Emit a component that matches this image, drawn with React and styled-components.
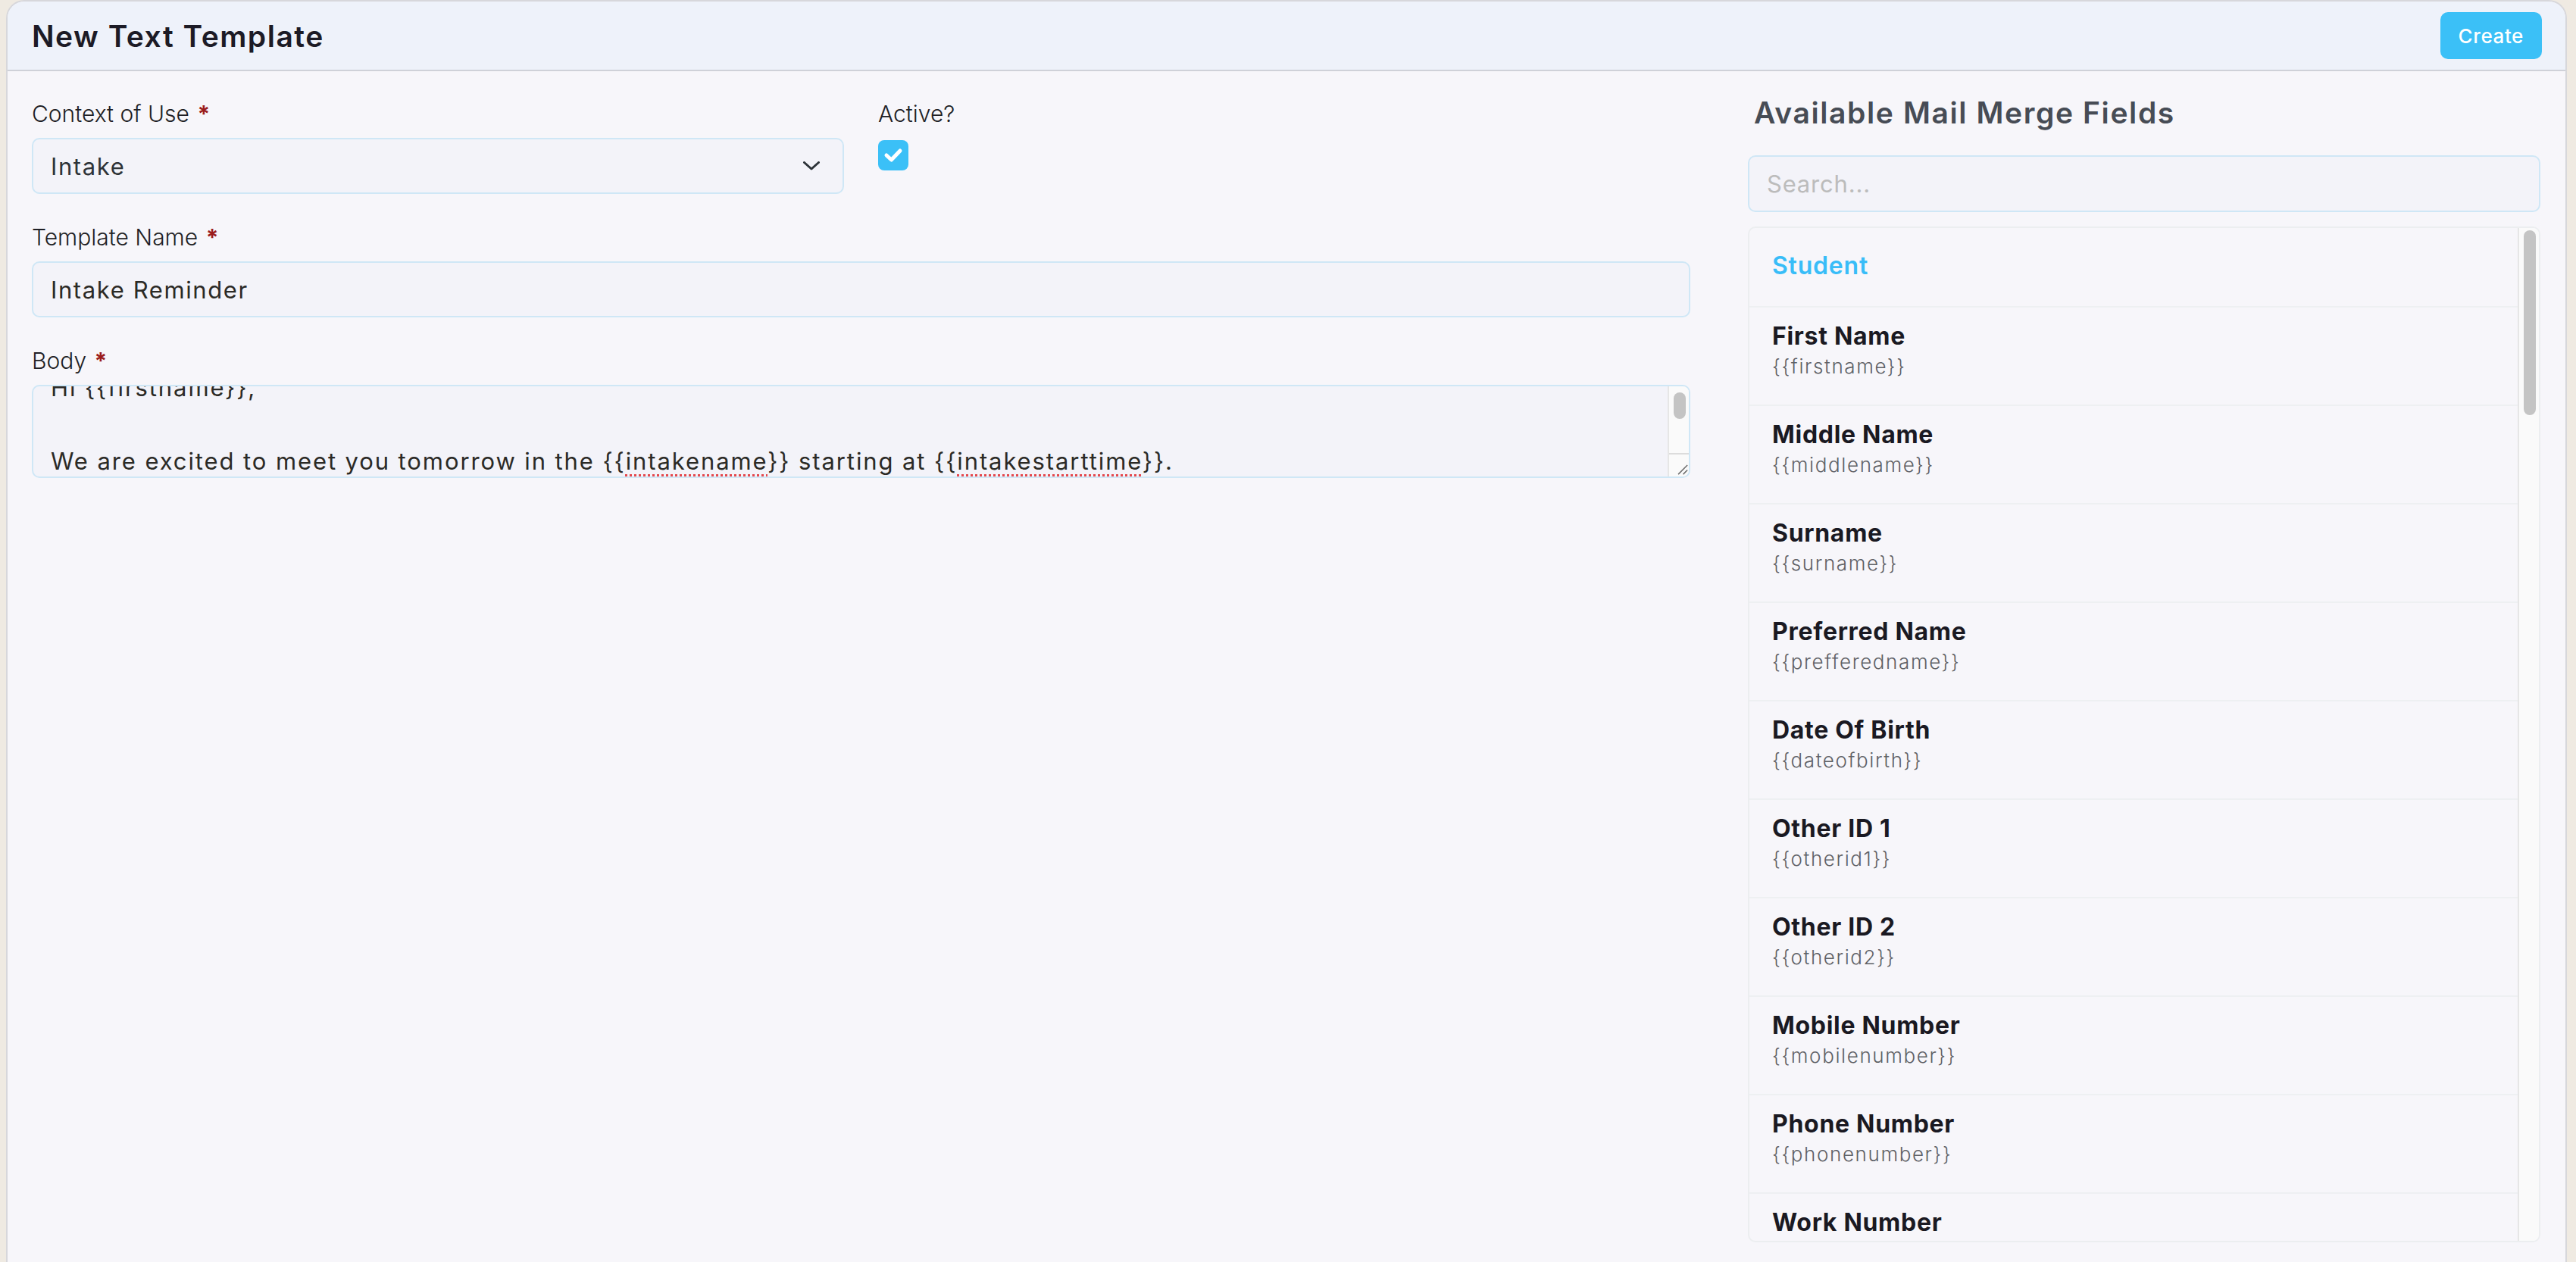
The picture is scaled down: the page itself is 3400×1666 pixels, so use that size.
import React, { useLayoutEffect, useRef } from "react";
import styled, { createGlobalStyle } from "styled-components";

const GlobalStyle = createGlobalStyle`
  html, body {
    margin: 0;
    padding: 0;
    background: #efeae2;
    font-family: Inter, "Noto Sans", sans-serif;
    color: #1c1b26;
  }
  * {
    box-sizing: border-box;
  }
`;

const FIELD_GROUPS = [
  {
    section: "Student",
    items: [
      ["First Name", "firstname"],
      ["Middle Name", "middlename"],
      ["Surname", "surname"],
      ["Preferred Name", "prefferedname"],
      ["Date Of Birth", "dateofbirth"],
      ["Other ID 1", "otherid1"],
      ["Other ID 2", "otherid2"],
      ["Mobile Number", "mobilenumber"],
      ["Phone Number", "phonenumber"],
      ["Work Number", "worknumber"],
      ["Email Address", "emailaddress"],
      ["Gender", "gender"],
      ["Address Line 1", "addressline1"],
      ["Address Line 2", "addressline2"],
      ["Suburb", "suburb"],
      ["State", "state"],
      ["Postcode", "postcode"],
      ["Country", "country"],
      ["Nationality", "nationality"],
      ["Student Number", "studentnumber"],
    ],
  },
  {
    section: "Intake",
    items: [
      ["Intake Name", "intakename"],
      ["Intake Date", "intakedate"],
      ["Intake Start Time", "intakestarttime"],
      ["Intake End Time", "intakeendtime"],
      ["Intake Location", "intakelocation"],
      ["Intake Room", "intakeroom"],
      ["Intake Address", "intakeaddress"],
      ["Intake Contact", "intakecontact"],
      ["Intake Contact Phone", "intakecontactphone"],
      ["Intake Contact Email", "intakecontactemail"],
      ["Intake Notes", "intakenotes"],
      ["Intake Capacity", "intakecapacity"],
    ],
  },
  {
    section: "Course",
    items: [
      ["Course Name", "coursename"],
      ["Course Code", "coursecode"],
      ["Course Start Date", "coursestartdate"],
      ["Course End Date", "courseenddate"],
      ["Course Duration", "courseduration"],
      ["Course Location", "courselocation"],
      ["Course Trainer", "coursetrainer"],
      ["Course Fee", "coursefee"],
      ["Course Delivery Mode", "coursedeliverymode"],
      ["Course Level", "courselevel"],
    ],
  },
  {
    section: "Organisation",
    items: [
      ["Organisation Name", "organisationname"],
      ["Organisation Phone", "organisationphone"],
      ["Organisation Email", "organisationemail"],
      ["Organisation Website", "organisationwebsite"],
      ["Organisation Address", "organisationaddress"],
      ["ABN", "abn"],
      ["RTO Number", "rtonumber"],
      ["CRICOS Code", "cricoscode"],
      ["Contact Name", "contactname"],
      ["Contact Phone", "contactphone"],
      ["Contact Email", "contactemail"],
      ["Today's Date", "todaysdate"],
    ],
  },
];

// Merge tag inside the body text, with the spellcheck squiggle
const Tag = ({ name }) => (
  <>
    {"{{"}
    <Misspelt>{name}</Misspelt>
    {"}}"}
  </>
);

const App = () => {
  const bodyRef = useRef(null);

  useLayoutEffect(() => {
    if (bodyRef.current) bodyRef.current.scrollTop = 39;
  }, []);

  return (
    <>
      <GlobalStyle />
      <Page>
        <Card>
          <Header>
            <Title>New Text Template</Title>
            <CreateButton>Create</CreateButton>
          </Header>

          <Content>
            <FormColumn>
              <TopRow>
                <Field>
                  <Label>
                    Context of Use <Required>*</Required>
                  </Label>
                  <SelectBox>
                    <span>Intake</span>
                    <svg width="22" height="12" viewBox="0 0 22 12">
                      <polyline
                        points="1.5,1.5 11,10 20.5,1.5"
                        fill="none"
                        stroke="#2d3339"
                        strokeWidth="3"
                        strokeLinecap="round"
                        strokeLinejoin="round"
                      />
                    </svg>
                  </SelectBox>
                </Field>
                <Field>
                  <Label>Active?</Label>
                  <CheckBox>
                    <svg width="40" height="40" viewBox="0 0 40 40">
                      <polyline
                        points="11,20 17.5,26 29,14"
                        fill="none"
                        stroke="#ffffff"
                        strokeWidth="5"
                        strokeLinecap="round"
                        strokeLinejoin="round"
                      />
                    </svg>
                  </CheckBox>
                </Field>
              </TopRow>

              <Field>
                <Label>
                  Template Name <Required>*</Required>
                </Label>
                <TextInput defaultValue="Intake Reminder" />
              </Field>

              <Field>
                <Label>
                  Body <Required>*</Required>
                </Label>
                <BodyBox>
                  <BodyText ref={bodyRef}>
                    <Line>Hi {"{{firstname}}"},</Line>
                    <Line>&nbsp;</Line>
                    <Line>
                      We are excited to meet you tomorrow in the <Tag name="intakename" /> starting at{" "}
                      <Tag name="intakestarttime" />.
                    </Line>
                    <Line>&nbsp;</Line>
                    <Line>Please bring your photo ID and arrive 15 minutes early.</Line>
                    <Line>&nbsp;</Line>
                    <Line>See you soon!</Line>
                  </BodyText>
                  <Rail>
                    <Thumb $top={8} $height={35} />
                    <Resizer>
                      <svg width="28" height="29" viewBox="0 0 28 29">
                        <line x1="13" y1="27" x2="26" y2="14" stroke="#6b6b6b" strokeWidth="1.6" />
                        <line x1="20" y1="27" x2="26" y2="21" stroke="#6b6b6b" strokeWidth="1.6" />
                      </svg>
                    </Resizer>
                  </Rail>
                </BodyBox>
              </Field>
            </FormColumn>

            <MergeColumn>
              <MergeHeading>Available Mail Merge Fields</MergeHeading>
              <SearchInput placeholder="Search..." />
              <FieldListBox>
                <FieldList>
                  {FIELD_GROUPS.map((group) => (
                    <React.Fragment key={group.section}>
                      <SectionRow>{group.section}</SectionRow>
                      {group.items.map(([name, tag]) => (
                        <FieldRow key={tag}>
                          <FieldName>{name}</FieldName>
                          <FieldTag>{`{{${tag}}}`}</FieldTag>
                        </FieldRow>
                      ))}
                    </React.Fragment>
                  ))}
                </FieldList>
                <Rail>
                  <Thumb $top={3} $height={244} />
                </Rail>
              </FieldListBox>
            </MergeColumn>
          </Content>
        </Card>
      </Page>
    </>
  );
};

export default App;

const Page = styled.div`
  padding: 0 12px 0 8px;
`;

const Card = styled.div`
  min-height: 100vh;
  background: #f7f6fa;
  border: 2px solid #d7d7db;
  border-bottom: 0;
  border-radius: 24px 24px 0 0;
  overflow: hidden;
`;

const Header = styled.header`
  height: 92px;
  display: flex;
  align-items: center;
  justify-content: space-between;
  padding: 0 31px 0 32px;
  background: #eef2fa;
  border-bottom: 2px solid #cfd1d8;
`;

const Title = styled.h1`
  margin: 0;
  font-size: 39px;
  font-weight: 600;
  letter-spacing: 1.5px;
  color: #1c1b26;
`;

const CreateButton = styled.button`
  height: 62px;
  padding: 0 24px;
  border: 0;
  border-radius: 10px;
  background: #3bc0f7;
  color: #ffffff;
  font-family: inherit;
  font-size: 26px;
  font-weight: 500;
  letter-spacing: 0.6px;
  cursor: pointer;
`;

const Content = styled.main`
  display: flex;
  gap: 76px;
  padding: 34px 33px 0 32px;
`;

const FormColumn = styled.section`
  flex: 1;
  display: flex;
  flex-direction: column;
  gap: 35px;
`;

const TopRow = styled.div`
  display: grid;
  grid-template-columns: 1fr 1fr;
  gap: 45px;
`;

const Field = styled.div`
  display: flex;
  flex-direction: column;
  align-items: flex-start;
`;

const Label = styled.label`
  font-size: 30px;
  line-height: 45px;
  font-weight: 300;
  color: #1f1f25;
  margin-bottom: 9px;
`;

const Required = styled.span`
  color: #9b1c1c;
  font-weight: 700;
  margin-left: 2px;
`;

const inputBox = `
  width: 100%;
  height: 74px;
  border: 2px solid #cfe7f6;
  border-radius: 10px;
  background: #f3f3f9;
  font-family: inherit;
  font-size: 31px;
  letter-spacing: 1.6px;
  color: #2b2a26;
  padding: 0 23px;
  outline: none;
`;

const SelectBox = styled.div`
  ${inputBox}
  display: flex;
  align-items: center;
  justify-content: space-between;
  padding-right: 30px;
  color: #2e3338;
`;

const TextInput = styled.input`
  ${inputBox}
`;

const CheckBox = styled.div`
  width: 40px;
  height: 40px;
  margin-top: 3px;
  border-radius: 8px;
  background: #3bc0f7;
  display: flex;
`;

const BodyBox = styled.div`
  width: 100%;
  height: 123px;
  display: flex;
  border: 2px solid #cfe7f6;
  border-radius: 10px;
  background: #f3f3f9;
  overflow: hidden;
`;

const BodyText = styled.div`
  flex: 1;
  overflow: hidden;
  padding: 17px 23px;
  font-size: 31px;
  line-height: 48.5px;
  letter-spacing: 1.9px;
  color: #2b2a26;
`;

const Rail = styled.div`
  width: 28px;
  flex-shrink: 0;
  display: flex;
  flex-direction: column;
  background: #fafafa;
  border-left: 2px solid #e6e6e6;
`;

const Thumb = styled.div`
  width: 16px;
  height: ${(p) => p.$height}px;
  margin: ${(p) => p.$top}px 0 0 6px;
  border-radius: 8px;
  background: #c4c4c4;
`;

const Resizer = styled.div`
  margin-top: auto;
  height: 31px;
  border-top: 2px solid #dcdcdc;
  display: flex;
`;

const Line = styled.div`
  white-space: pre-wrap;
`;

const Misspelt = styled.span`
  text-decoration: underline dotted #e5484d;
  text-decoration-thickness: 3px;
  text-underline-offset: 6px;
`;

const MergeColumn = styled.aside`
  width: 1046px;
  display: flex;
  flex-direction: column;
`;

const MergeHeading = styled.h2`
  margin: -2px 0 0;
  font-size: 39px;
  line-height: 1.2;
  font-weight: 600;
  letter-spacing: 1.6px;
  color: #474c55;
  padding-left: 8px;
`;

const SearchInput = styled.input`
  ${inputBox}
  margin-top: 32px;
  height: 75px;
  letter-spacing: 0.8px;
  color: #333;

  &::placeholder {
    color: #bcbcbc;
  }
`;

const FieldListBox = styled.div`
  margin-top: 19px;
  height: 1341px;
  display: flex;
  border: 2px solid #eceef0;
  border-radius: 10px;
  overflow: hidden;
`;

const FieldList = styled.div`
  flex: 1;
  overflow: hidden;
`;

const SectionRow = styled.div`
  padding: 30px 30px 34px;
  font-size: 32px;
  line-height: 39px;
  font-weight: 600;
  letter-spacing: 0.8px;
  color: #38bdf8;
`;

const FieldRow = styled.div`
  border-top: 2px solid #eef0f2;
  padding: 18px 30px 33px;
`;

const FieldName = styled.div`
  font-size: 32px;
  line-height: 39px;
  font-weight: 700;
  letter-spacing: 0.7px;
  color: #1a1922;
`;

const FieldTag = styled.div`
  margin-top: 4px;
  font-size: 26px;
  line-height: 34px;
  font-weight: 300;
  letter-spacing: 1.6px;
  color: #5f6166;
`;
